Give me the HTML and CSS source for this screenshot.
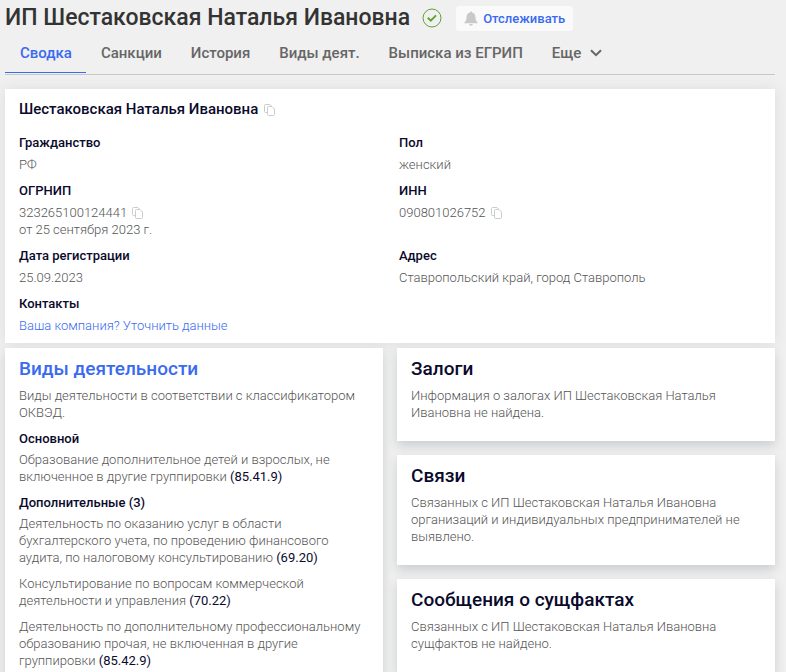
FILE: index.html
```html
<!DOCTYPE html>
<html lang="ru">
<head>
  <meta charset="UTF-8">
  <meta name="viewport" content="width=device-width, initial-scale=1.0">
  <title>ИП Шестаковская Наталья Ивановна</title>
  <link rel="stylesheet" href="styles.css">
</head>
<body>
  <svg class="sprite" aria-hidden="true">
    <symbol id="icon-copy" viewBox="0 0 12 12">
      <path d="M3 8.5H1.5a1 1 0 0 1-1-1v-6a1 1 0 0 1 1-1H6l1.5 1.5" />
      <path d="M4.500 2.500h3.500l2.500 2.500v5.500a1 1 0 0 1-1 1h-5a1 1 0 0 1-1-1v-7a1 1 0 0 1 1-1z" />
    </symbol>
  </svg>
  <div class="container">
    <header class="header">
      <h1>ИП Шестаковская Наталья Ивановна</h1>
      <svg class="status" viewBox="0 0 20 20" aria-hidden="true">
        <circle cx="10" cy="10" r="9" />
        <path d="M5.800 9.700l3 2.900 5.200-5.200" />
      </svg>
      <button type="button" class="watch-btn">
        <svg class="bell" viewBox="0 0 14 15" aria-hidden="true">
          <path d="M7 .5c-.7 0-1 .4-1 1C3.800 2 2.600 3.600 2.600 5.800c0 3-.7 4.200-2.100 5.400v1h13v-1c-1.400-1.200-2.100-2.400-2.100-5.400C11.400 3.600 10.200 2 8 1.500c0-.6-.3-1-1-1zM5.200 13a1.800 1.800 0 0 0 3.600 0z" />
        </svg>
        Отслеживать
      </button>
    </header>

    <nav class="tabs">
      <a href="#" class="tab active">Сводка</a>
      <a href="#" class="tab">Санкции</a>
      <a href="#" class="tab">История</a>
      <a href="#" class="tab">Виды деят.</a>
      <a href="#" class="tab">Выписка из ЕГРИП</a>
      <button type="button" class="tab more">
        Еще
        <svg class="chevron" viewBox="0 0 12 8" aria-hidden="true"><path d="M1 1.200l5 5 5-5" /></svg>
      </button>
    </nav>

    <section class="card summary">
      <div class="full-name">
        Шестаковская Наталья Ивановна
        <button type="button" class="copy" aria-label="Копировать"><svg><use href="#icon-copy" /></svg></button>
      </div>
      <dl class="details">
        <div>
          <dt>Гражданство</dt>
          <dd>РФ</dd>
        </div>
        <div>
          <dt>Пол</dt>
          <dd>женский</dd>
        </div>
        <div>
          <dt>ОГРНИП</dt>
          <dd>323265100124441 <button type="button" class="copy" aria-label="Копировать"><svg><use href="#icon-copy" /></svg></button></dd>
          <dd>от 25 сентября 2023 г.</dd>
        </div>
        <div>
          <dt>ИНН</dt>
          <dd>090801026752 <button type="button" class="copy" aria-label="Копировать"><svg><use href="#icon-copy" /></svg></button></dd>
        </div>
        <div>
          <dt>Дата регистрации</dt>
          <dd>25.09.2023</dd>
        </div>
        <div>
          <dt>Адрес</dt>
          <dd>Ставропольский край, город Ставрополь</dd>
        </div>
        <div>
          <dt>Контакты</dt>
          <dd><a href="#">Ваша компания? Уточнить данные</a></dd>
        </div>
      </dl>
    </section>

    <div class="columns">
      <div class="column">
        <section class="card">
          <h2><a href="#">Виды деятельности</a></h2>
          <p>Виды деятельности в соответствии с классификатором ОКВЭД.</p>
          <h3>Основной</h3>
          <p>Образование дополнительное детей и взрослых, не включенное в другие группировки <span class="code">(85.41.9)</span></p>
          <h3>Дополнительные (3)</h3>
          <p>Деятельность по оказанию услуг в области бухгалтерского учета, по проведению финансового аудита, по налоговому консультированию <span class="code">(69.20)</span></p>
          <p>Консультирование по вопросам коммерческой деятельности и управления <span class="code">(70.22)</span></p>
          <p>Деятельность по дополнительному профессиональному образованию прочая, не включенная в другие группировки <span class="code">(85.42.9)</span></p>
        </section>
      </div>
      <div class="column">
        <section class="card">
          <h2>Залоги</h2>
          <p>Информация о залогах ИП Шестаковская Наталья Ивановна не найдена.</p>
        </section>
        <section class="card">
          <h2>Связи</h2>
          <p>Связанных с ИП Шестаковская Наталья Ивановна организаций и индивидуальных предпринимателей не выявлено.</p>
        </section>
        <section class="card">
          <h2>Сообщения о сущфактах</h2>
          <p>Связанных с ИП Шестаковская Наталья Ивановна сущфактов не найдено.</p>
        </section>
      </div>
    </div>
  </div>
</body>
</html>
```
FILE: styles.css
```css
* {
  box-sizing: border-box;
}
body {
  margin: 0;
  background-color: #f0f0f0;
  color: #555;
  font-family: Roboto, "Open Sans", sans-serif;
  font-size: 13px;
  font-weight: 300;
  line-height: 17px;
  overflow-x: hidden;
}
button {
  margin: 0;
  border: 0;
  padding: 0;
  background: none;
  font-family: inherit;
  cursor: pointer;
}
a {
  color: #3a6af0;
  text-decoration: none;
}
h1, h2, h3, p, dl, dd {
  margin: 0;
}
.sprite {
  display: none;
}
.container {
  padding: 5px 11px 0 5px;
}

.header {
  display: flex;
  align-items: center;
  height: 26px;
}
h1 {
  color: #333;
  font-size: 23px;
  font-weight: 500;
  line-height: 26px;
}
.status {
  width: 20px;
  height: 20px;
  margin: 0 14px 0 12px;
  fill: none;
  stroke: #5fa336;
}
.status path {
  stroke-width: 2;
}
.watch-btn {
  display: flex;
  align-items: center;
  gap: 5px;
  height: 25px;
  padding: 0 8px;
  border-radius: 3px;
  background-color: #fafafa;
  color: #3a6af0;
  font-size: 13px;
  font-weight: 500;
}
.bell {
  width: 14px;
  height: 15px;
  fill: #c9c9c9;
}

.tabs {
  display: flex;
  height: 44px;
  margin-bottom: 14px;
  border-bottom: 1px solid #c8c8c8;
}
.tab {
  height: 42px;
  padding: 12px 14px 0 15px;
  color: #666;
  font-size: 15px;
  font-weight: 500;
  line-height: 20px;
  white-space: nowrap;
}
.tab.active {
  border-bottom: 1px solid #3a6af0;
  color: #3a6af0;
}
.more {
  display: flex;
  align-items: flex-start;
  gap: 9px;
}
.chevron {
  width: 12px;
  height: 8px;
  margin-top: 6px;
  fill: none;
  stroke: #666;
  stroke-width: 2;
}

.card {
  padding: 9px 14px 20px;
  background-color: #fff;
  box-shadow: 0 5px 10px rgba(60, 70, 80, 0.2);
}
.summary {
  margin-bottom: 5px;
  padding: 12px 14px 9px;
  box-shadow: 0 0 14px rgba(60, 70, 80, 0.1);
}
.full-name {
  margin-bottom: 16px;
  color: #0a0a2d;
  font-size: 15px;
  font-weight: 500;
}
.copy {
  margin-left: 2px;
  vertical-align: -2px;
}
.copy svg {
  display: block;
  width: 12px;
  height: 12px;
  fill: #fff;
  stroke: #ccc;
}
.details {
  display: grid;
  grid-template-columns: 1fr 1fr;
  column-gap: 18px;
  row-gap: 9px;
}
dt {
  margin-bottom: 5px;
}
dt, h3 {
  color: #0a0a2d;
  font-size: 13px;
  font-weight: 500;
}

.columns {
  display: grid;
  grid-template-columns: 1fr 1fr;
  gap: 14px;
}
.column {
  display: flex;
  flex-direction: column;
  gap: 14px;
}
h2 {
  margin-bottom: 6px;
  color: #0a0a2d;
  font-size: 19px;
  font-weight: 500;
  line-height: 24px;
}
h3 {
  margin: 9px 0 4px;
}
p + p {
  margin-top: 9px;
}
.code {
  color: #0a0a2d;
  font-weight: 400;
}
```
